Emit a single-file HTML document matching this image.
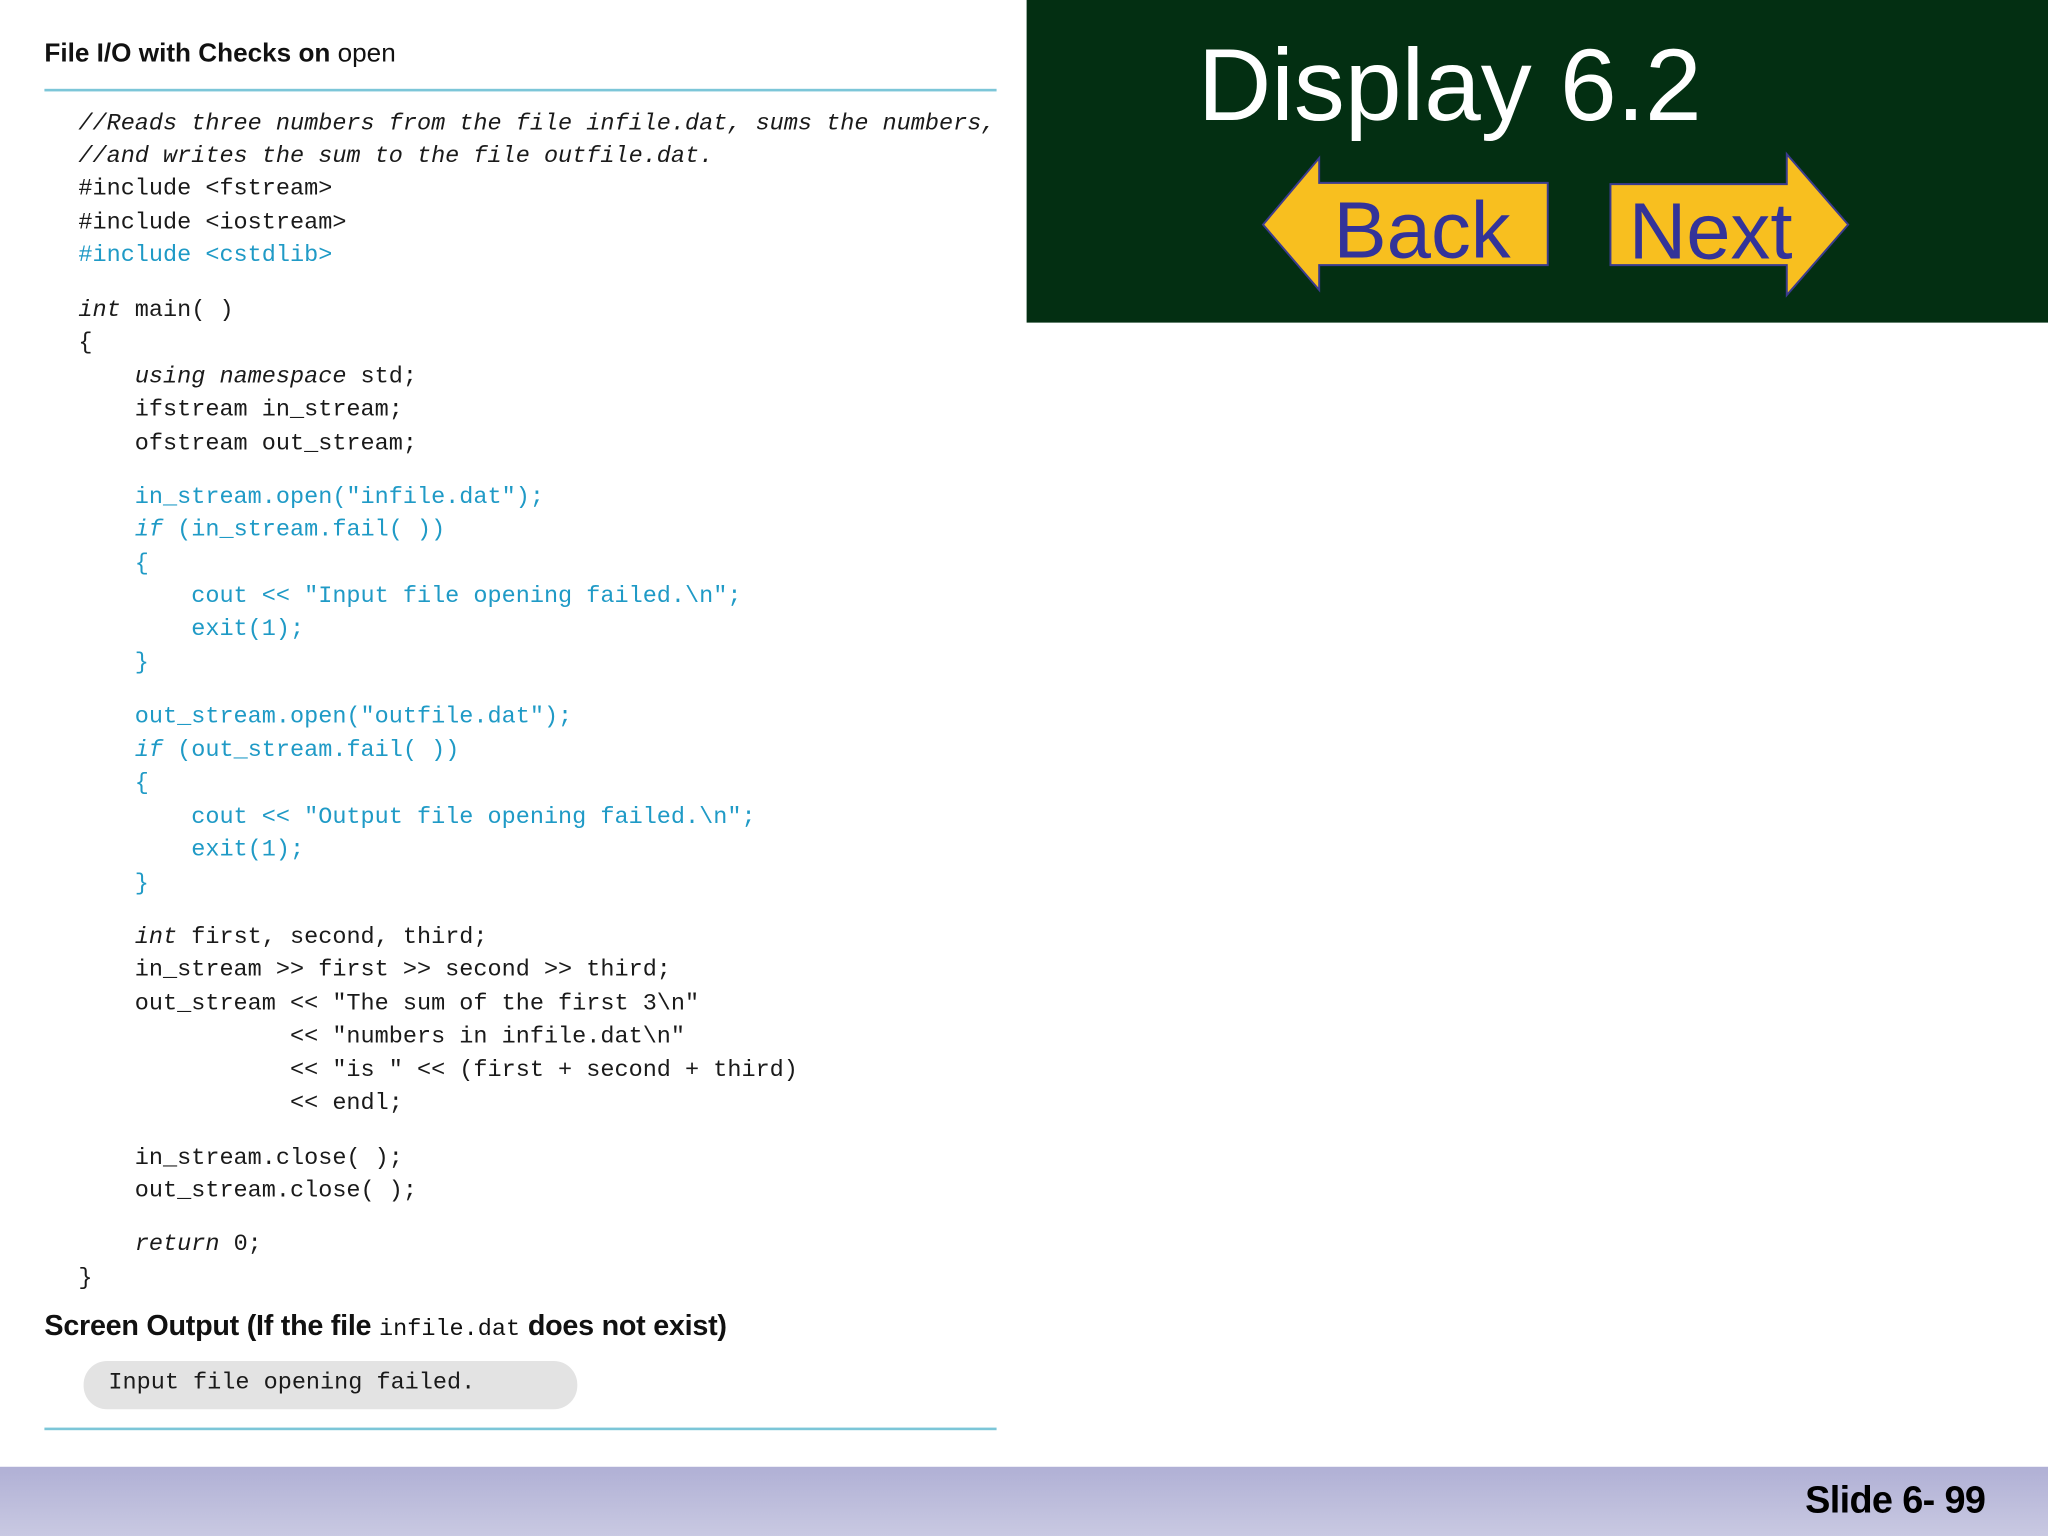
<!DOCTYPE html>
<html><head><meta charset="utf-8"><style>
html,body{margin:0;padding:0;background:#fff;overflow:hidden}
body{width:2048px;height:1536px;position:relative}
#s{position:absolute;left:0;top:0;width:1568px;height:1176px;transform:scale(1.306122);transform-origin:0 0}
.c{position:absolute;left:60px;font-family:"Liberation Mono",monospace;font-size:18px;line-height:24px;white-space:pre;color:#1a1a1a;margin-top:2px}
.b{color:#1f9ac6}
i{font-style:italic}
.rule{position:absolute;left:34px;width:729px;height:2px;background:#7cc6d8}
</style></head><body><div id="s">
<div style="position:absolute;left:34px;top:30px;font-family:'Liberation Sans',sans-serif;font-weight:bold;font-size:20px;letter-spacing:0;color:#111">File I/O with Checks on <span style="font-weight:normal">open</span></div>
<div class="rule" style="top:68px"></div>

<div class="c" style="top:81px"><i>//Reads three numbers from the file infile.dat, sums the numbers,</i></div>
<div class="c" style="top:106px"><i>//and writes the sum to the file outfile.dat.</i></div>
<div class="c" style="top:131px">#include &lt;fstream&gt;</div>
<div class="c" style="top:157px">#include &lt;iostream&gt;</div>
<div class="c b" style="top:182px">#include &lt;cstdlib&gt;</div>
<div class="c" style="top:224px"><i>int</i> main( )</div>
<div class="c" style="top:249px">{</div>
<div class="c" style="top:275px">    <i>using namespace</i> std;</div>
<div class="c" style="top:300px">    ifstream in_stream;</div>
<div class="c" style="top:326px">    ofstream out_stream;</div>
<div class="c b" style="top:367px">    in_stream.open("infile.dat");</div>
<div class="c b" style="top:392px">    <i>if</i> (in_stream.fail( ))</div>
<div class="c b" style="top:418px">    {</div>
<div class="c b" style="top:443px">        cout &lt;&lt; "Input file opening failed.\n";</div>
<div class="c b" style="top:468px">        exit(1);</div>
<div class="c b" style="top:494px">    }</div>
<div class="c b" style="top:535px">    out_stream.open("outfile.dat");</div>
<div class="c b" style="top:561px">    <i>if</i> (out_stream.fail( ))</div>
<div class="c b" style="top:586px">    {</div>
<div class="c b" style="top:612px">        cout &lt;&lt; "Output file opening failed.\n";</div>
<div class="c b" style="top:637px">        exit(1);</div>
<div class="c b" style="top:663px">    }</div>
<div class="c" style="top:704px">    <i>int</i> first, second, third;</div>
<div class="c" style="top:729px">    in_stream &gt;&gt; first &gt;&gt; second &gt;&gt; third;</div>
<div class="c" style="top:755px">    out_stream &lt;&lt; "The sum of the first 3\n"</div>
<div class="c" style="top:780px">               &lt;&lt; "numbers in infile.dat\n"</div>
<div class="c" style="top:806px">               &lt;&lt; "is " &lt;&lt; (first + second + third)</div>
<div class="c" style="top:831px">               &lt;&lt; endl;</div>
<div class="c" style="top:873px">    in_stream.close( );</div>
<div class="c" style="top:898px">    out_stream.close( );</div>
<div class="c" style="top:939px">    <i>return</i> 0;</div>
<div class="c" style="top:965px">}</div>

<div style="position:absolute;left:34px;top:1002px;font-family:'Liberation Sans',sans-serif;font-weight:bold;font-size:22px;letter-spacing:-0.2px;color:#111;white-space:pre">Screen Output (If the file <span style="font-family:'Liberation Mono',monospace;font-weight:normal;font-size:18px;letter-spacing:0">infile.dat</span> does not exist)</div>
<div style="position:absolute;left:64px;top:1042px;width:378px;height:37px;background:#e3e3e3;border-radius:18px"></div>
<div class="c" style="left:83px;top:1045px">Input file opening failed.</div>
<div class="rule" style="top:1093px"></div>

<div style="position:absolute;left:0;top:1123px;width:1568px;height:53px;background:linear-gradient(#b0b0d5,#c9c9e2)"></div>
<div style="position:absolute;right:48px;top:1133px;font-family:'Liberation Sans',sans-serif;font-weight:bold;font-size:29px;color:#000;letter-spacing:-0.5px">Slide 6- 99</div>

<div style="position:absolute;left:786px;top:0;width:782px;height:247px;background:#032f12"></div>
<div style="position:absolute;left:917px;top:19px;font-family:'Liberation Sans',sans-serif;font-size:78px;line-height:92px;color:#fff">Display 6.2</div>
<svg style="position:absolute;left:0;top:0" width="1568" height="260">
<polygon points="967,172 1010,121 1010,140 1185,140 1185,203 1010,203 1010,222" fill="#f8bf1f" stroke="#3b3b8f" stroke-width="1.5"/>
<polygon points="1233,141 1368,141 1368,118 1415,172 1368,226 1368,203 1233,203" fill="#f8bf1f" stroke="#3b3b8f" stroke-width="1.5"/>
<text x="1021" y="197" font-family="Liberation Sans, sans-serif" font-size="61" fill="#333399">Back</text>
<text x="1247" y="198" font-family="Liberation Sans, sans-serif" font-size="61" fill="#333399">Next</text>
</svg>
</div></body></html>
